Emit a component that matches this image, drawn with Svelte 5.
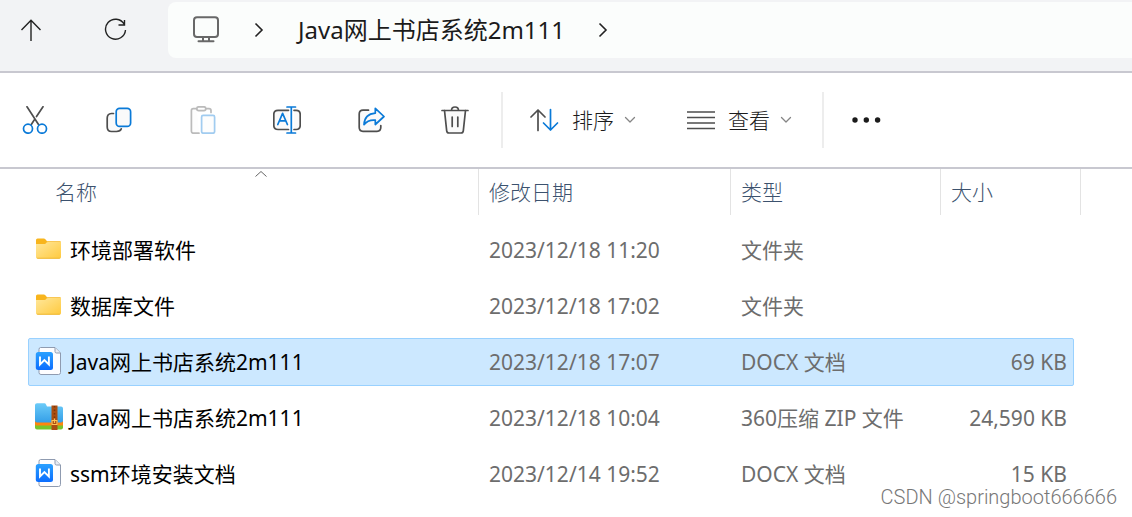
<script>
  const files = [
    { name: '环境部署软件', date: '2023/12/18 11:20', type: '文件夹', size: '', icon: 'folder' },
    { name: '数据库文件', date: '2023/12/18 17:02', type: '文件夹', size: '', icon: 'folder' },
    { name: 'Java网上书店系统2m111', date: '2023/12/18 17:07', type: 'DOCX 文档', size: '69 KB', icon: 'doc' },
    { name: 'Java网上书店系统2m111', date: '2023/12/18 10:04', type: '360压缩 ZIP 文件', size: '24,590 KB', icon: 'zip' },
    { name: 'ssm环境安装文档', date: '2023/12/14 19:52', type: 'DOCX 文档', size: '15 KB', icon: 'doc' }
  ];
  let selected = $state(2);
</script>

{#snippet chevronRight()}
  <svg width="10" height="16" viewBox="0 0 10 16" class="crumb-arrow"><path d="M1.500 1.500 8 8l-6.500 6.500" /></svg>
{/snippet}

{#snippet chevronDown()}
  <svg width="12" height="8" viewBox="0 0 12 8" class="chev"><path d="m1.500 1.500 4.500 4.500 4.500-4.500" /></svg>
{/snippet}

<div class="window">
  <header class="address-row">
    <button class="nav-btn" aria-label="向上">
      <svg width="22" height="24" viewBox="0 0 22 24"><path d="M11 23V2M1.500 12 11 2.200 20.500 12" /></svg>
    </button>
    <button class="nav-btn" aria-label="刷新">
      <svg width="24" height="24" viewBox="0 0 24 24"><path d="M20.200 6.200A10 10 0 1 0 21.500 12M20.500 2V7H14.500" /></svg>
    </button>
    <nav class="crumbs" aria-label="路径">
      <svg class="monitor" width="28" height="28" viewBox="0 0 28 28">
        <rect x="2" y="1.200" width="24" height="19.800" rx="3" />
        <path d="M11 21v4M17 21v4M6.500 25.200h15" />
      </svg>
      {@render chevronRight()}
      <a href="#current">Java网上书店系统2m111</a>
      {@render chevronRight()}
    </nav>
  </header>

  <div class="toolbar" role="toolbar" aria-label="命令">
    <div class="group icons">
      <button aria-label="剪切">
        <svg width="28" height="28" viewBox="0 0 28 28">
          <path d="M6 .8 17.500 18.500M22 .8 15.500 10.500M13.200 14 10.300 18.500" />
          <g class="blue"><circle cx="7" cy="22.700" r="4.500" /><circle cx="21" cy="22.700" r="4.500" /></g>
        </svg>
      </button>
      <button aria-label="复制">
        <svg width="28" height="28" viewBox="0 0 28 28">
          <path class="tint" d="M8.500 7.500H6.500Q2.200 7.800 2.200 12V21Q2.200 25.500 6.500 25.500H11.500Q15.400 25.500 16.300 22.800" />
          <rect class="blue tint" x="11.200" y="2.400" width="14.400" height="18" rx="3.400" />
        </svg>
      </button>
      <button aria-label="粘贴" disabled>
        <svg width="28" height="28" viewBox="0 0 28 28">
          <path class="tint" d="M7.500 2.600H4.200Q2.400 2.600 2.400 4.400V25.300Q2.400 27.200 4.200 27.200H10M17 2.600H20Q22 2.600 22 4.600V6.500" />
          <rect x="7.800" y=".8" width="9" height="3.800" rx="1.900" />
          <rect class="blue tint" x="12.600" y="9.300" width="13" height="17.900" rx="1.600" />
        </svg>
      </button>
      <button aria-label="重命名">
        <svg width="28" height="28" viewBox="0 0 28 28">
          <path class="tint" d="M15.500 4.300H5Q.8 4.300 .8 8.500V19.300Q.8 23.500 5 23.500H15.500M21 4.300H23.200Q27.200 4.300 27.200 8.500V19.300Q27.200 23.500 23.200 23.500H21" />
          <path class="blue" d="M18.300 1V27M14 1H22.500M14 27H22.500M4.800 18.500 9.600 7.300 14.400 18.500M6.500 14.800H12.700" />
        </svg>
      </button>
      <button aria-label="共享">
        <svg width="28" height="28" viewBox="0 0 28 28">
          <path class="tint" d="M11.500 4.200H6Q2.200 4.200 2.200 8V21.300Q2.200 25.300 6 25.300H20Q23.800 25.300 23.800 21.300V19.500" />
          <path class="blue tint" d="M18.300 2.300 27 10.500 18.300 18.500V14.200Q11 13.500 7 18.700 7.500 8 18.300 7.200Z" />
        </svg>
      </button>
      <button aria-label="删除">
        <svg width="28" height="28" viewBox="0 0 28 28">
          <path class="tint" d="M3.500 4.500 5.700 24.800Q6 27 8 27H20Q22 27 22.300 24.800L24.500 4.500" />
          <path d="M1 4.500H27M10.500 4.500Q10.500 1 14 1T17.500 4.500M11.200 11V20.500M16.800 11V20.500" />
        </svg>
      </button>
    </div>
    <div class="group menus">
      <button>
        <svg width="29" height="24" viewBox="0 0 29 24">
          <path d="M8 22.500V2M1 9 8 2l7 7" /><path class="blue" d="M20.500 1.500V22M13.500 15l7 7 7-7" />
        </svg>
        <span>排序</span>
        {@render chevronDown()}
      </button>
      <button>
        <svg width="28" height="20" viewBox="0 0 28 20"><path d="M0 2H28M0 7.500H28M0 13H28M0 18.500H28" /></svg>
        <span>查看</span>
        {@render chevronDown()}
      </button>
    </div>
    <div class="group more">
      <button aria-label="更多">
        <svg class="dots" width="29" height="6" viewBox="0 0 29 6"><circle cx="3" cy="3" r="2.700" /><circle cx="14.300" cy="3" r="2.700" /><circle cx="25.600" cy="3" r="2.700" /></svg>
      </button>
    </div>
  </div>

  <table>
    <thead>
      <tr>
        <th aria-sort="ascending">
          <svg class="sort-mark" width="12" height="7" viewBox="0 0 12 7"><path d="m.5 6.500 5.500-5 5.500 5" /></svg>
          名称
        </th>
        <th>修改日期</th>
        <th>类型</th>
        <th>大小</th>
      </tr>
    </thead>
    <tbody>
      {#each files as file, i}
        <tr class:selected={selected === i} onclick={() => (selected = i)}>
          <td class="name">
            {#if file.icon === 'folder'}
              <svg width="28" height="28" viewBox="0 0 28 28">
                <defs><linearGradient id="folder{i}" x1="0" y1="0" x2="1" y2="1"><stop offset="0" stop-color="#ffe79b" /><stop offset="1" stop-color="#ffca3f" /></linearGradient></defs>
                <path fill="#f8b51d" d="M1 5Q1 3.500 2.500 3.500H9Q10.200 3.500 11 5L12 6.200H25Q26 6.200 26 7.500V12H1Z" />
                <path fill="url(#folder{i})" d="M1 9H9.500Q10.500 9 11.500 7.500 12 7 13 7H26V22Q26 23.500 24.500 23.500H2.500Q1 23.500 1 22Z" />
                <path fill="#eeb62f" d="M1.500 22.800H25.500L24.500 23.700H2.500Z" />
              </svg>
            {:else if file.icon === 'doc'}
              <svg width="28" height="28" viewBox="0 0 28 28">
                <defs><linearGradient id="doc{i}" x1="0" y1="0" x2="0" y2="1"><stop offset="0" stop-color="#2ba1ff" /><stop offset="1" stop-color="#0b6dff" /></linearGradient></defs>
                <path fill="#fdfdff" stroke="#8f9bb0" d="M5.500 .5H20L25.500 6V25.500Q25.500 27.500 23.500 27.500H6Q4 27.500 4 25.500V2.500Q4 .5 5.500 .5Z" />
                <path fill="#e9edf4" stroke="#8f9bb0" d="M20 .8V4.500Q20 6 21.500 6H25.300" />
                <rect x=".8" y="5" width="17.200" height="18" rx="2.500" fill="url(#doc{i})" />
                <path fill="none" stroke="#fff" stroke-width="1.900" d="M5 9.500V17.500L9.400 13 13.900 17.500V9.500" />
              </svg>
            {:else}
              <svg width="28" height="28" viewBox="0 0 28 28">
                <defs><linearGradient id="zip{i}" x1="0" y1="0" x2="0" y2="1"><stop offset="0" stop-color="#6ccbf8" /><stop offset="1" stop-color="#349fe8" /></linearGradient></defs>
                <path fill="#78c52c" d="M0 20H28V24.500Q28 26.500 26 26.500H2Q0 26.500 0 24.500Z" />
                <path fill="#ff850f" d="M0 18H28V22.500H1.500Q0 22.500 0 21Z" />
                <path fill="url(#zip{i})" d="M0 2Q0 .3 2 .3H9.500Q10.500 .3 11 1.500L12 3.500H26Q28 3.500 28 5.500V17.500Q28 19.500 26 19.500H2Q0 19.500 0 17.500Z" />
                <path fill="#a94e12" d="M16.500 2.500H22.500V27H16.500Z" />
                <path fill="none" stroke="#7d3508" stroke-dasharray="1.500 2" stroke-width="1.500" d="M19.500 3V16" />
                <path fill="none" stroke="#ffc253" stroke-width="1.200" d="M17 17.500H22V21.500H17ZM19.500 15.500V20" />
              </svg>
            {/if}
            <span>{file.name}</span>
          </td>
          <td>{file.date}</td>
          <td>{file.type}</td>
          <td class="size">{file.size}</td>
        </tr>
      {/each}
    </tbody>
  </table>
  <div class="watermark">CSDN @springboot666666</div>
</div>

<style>
  :global(body) { background: #fff; }
  .window {
    position: relative;
    min-height: 517px;
    font-family: "Noto Sans", "Noto Sans CJK SC", sans-serif;
    font-size: 21px;
    line-height: 28px;
    color: #1b1b1b;
  }
  svg { display: block; flex: none; }
  button {
    display: flex;
    align-items: center;
    padding: 0;
    border: 0;
    background: none;
    font: inherit;
    color: inherit;
  }
  .address-row {
    display: flex;
    align-items: center;
    height: 56px;
    padding: 2px 0 13px 20px;
    border-bottom: 2px solid #c8c8d0;
    background: #f2f3f5;
  }
  .nav-btn { margin-right: 62px; }
  .nav-btn + .nav-btn { margin-right: 40px; }
  .nav-btn path, .crumb-arrow path { fill: none; stroke: #222; stroke-width: 1.4; }
  .crumb-arrow path { stroke-width: 1.6; }
  .crumbs {
    display: flex;
    align-items: center;
    flex: 1;
    min-width: 0;
    height: 56px;
    padding-left: 24px;
    border-radius: 8px 0 0 8px;
    background: #fbfdfc;
  }
  .crumbs a {
    margin: 0 33px 0 34px;
    font-size: 24px;
    line-height: 32px;
    color: #1b1b1b;
    text-decoration: none;
    white-space: nowrap;
  }
  .monitor { margin-right: 34px; fill: none; stroke: #686868; stroke-width: 2; stroke-linecap: round; }

  .toolbar {
    display: flex;
    align-items: center;
    height: 94px;
    padding-left: 21px;
    border-bottom: 2px solid #c8c8d0;
  }
  .group { display: flex; align-items: center; height: 56px; }
  .group svg { fill: none; stroke: #4e4e4e; stroke-width: 1.7; stroke-linecap: round; stroke-linejoin: round; }
  .icons { gap: 56px; padding-right: 32px; }
  .menus { gap: 51px; padding: 0 30px 0 27px; border: solid #ededed; border-width: 0 2px; }
  .menus span { margin: 0 10px 0 13px; font-weight: 300; white-space: nowrap; }
  .more { padding-left: 28px; }
  .group .blue { stroke: #0a7ad8; }
  .group .tint { fill: #fafafa; }
  button:disabled { opacity: 0.38; }
  .group .chev { stroke: #858585; stroke-width: 1.3; }
  .group .dots { fill: #1b1b1b; stroke: none; }

  table {
    display: block;
    padding: 0 51px 0 28px;
  }
  thead, tbody { display: block; }
  tr {
    display: grid;
    grid-template-columns: minmax(0, 1fr) 252px 210px 134px;
    box-sizing: border-box;
  }
  thead tr { grid-template-columns: minmax(0, 1fr) 252px 210px 140px; }
  th {
    position: relative;
    height: 46px;
    box-sizing: border-box;
    padding: 9px 0 0 10px;
    border-right: 1px solid #e3e3e3;
    text-align: left;
    font-weight: 300;
    color: #3c526e;
  }
  th:first-child { padding-left: 27px; }
  .sort-mark {
    position: absolute;
    top: 1px;
    left: calc(50% + 2px);
    fill: none;
    stroke: #666;
  }
  tbody { padding: 11px 7px 0 0; }
  tbody tr {
    height: 48px;
    margin-bottom: 8px;
    border: 1px solid transparent;
    border-radius: 2px;
    align-items: center;
  }
  tbody tr.selected { background: #cce8ff; border-color: #99d1ff; }
  td { padding: 0 0 0 12px; color: #6d6d6d; white-space: nowrap; }
  td.name { display: flex; align-items: center; gap: 7px; padding-left: 6px; color: #000; }
  td.name svg { margin-bottom: 2px; }
  td.size { padding: 0 6px 0 0; text-align: right; }
  .watermark {
    position: absolute;
    right: 15px;
    bottom: 10px;
    font-family: Roboto, sans-serif;
    font-weight: 300;
    font-size: 20px;
    line-height: 20px;
    color: #777;
    text-shadow: 1px 1px 1px #fff, -1px -1px 1px #fff;
  }
</style>
